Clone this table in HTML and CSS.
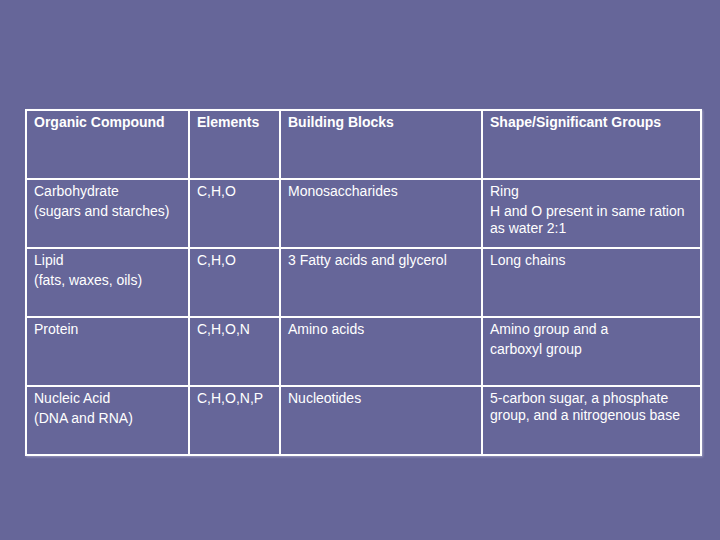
FILE: index.html
```html
<!DOCTYPE html>
<html>
<head>
<meta charset="utf-8">
<link rel="stylesheet" href="styles.css">
</head>
<body>
<div class="slide">
  <div class="grid">
    <div class="cell head"><p>Organic Compound</p></div>
    <div class="cell head"><p>Elements</p></div>
    <div class="cell head"><p>Building Blocks</p></div>
    <div class="cell head"><p>Shape/Significant Groups</p></div>

    <div class="cell"><p>Carbohydrate</p><p>(sugars and starches)</p></div>
    <div class="cell"><p>C,H,O</p></div>
    <div class="cell"><p>Monosaccharides</p></div>
    <div class="cell"><p>Ring</p><p>H and O present in same ration as water 2:1</p></div>

    <div class="cell"><p>Lipid</p><p>(fats, waxes, oils)</p></div>
    <div class="cell"><p>C,H,O</p></div>
    <div class="cell"><p>3 Fatty acids and glycerol</p></div>
    <div class="cell"><p>Long chains</p></div>

    <div class="cell"><p>Protein</p></div>
    <div class="cell"><p>C,H,O,N</p></div>
    <div class="cell"><p>Amino acids</p></div>
    <div class="cell"><p>Amino group and a</p><p>carboxyl group</p></div>

    <div class="cell"><p>Nucleic Acid</p><p>(DNA and RNA)</p></div>
    <div class="cell"><p>C,H,O,N,P</p></div>
    <div class="cell"><p>Nucleotides</p></div>
    <div class="cell"><p>5-carbon sugar, a phosphate group, and a nitrogenous base</p></div>
  </div>
</div>
</body>
</html>
```

FILE: styles.css
```css
html, body {
  margin: 0;
  padding: 0;
}
body {
  background: #666699;
  width: 720px;
  height: 540px;
  overflow: hidden;
  font-family: "Liberation Sans", Arial, sans-serif;
  font-size: 14px;
  color: #ffffff;
}
.slide {
  padding: 109px 0 0 25px;
}
.grid {
  display: grid;
  grid-template-columns: 161px 89px 200px 217px;
  grid-auto-rows: 67px;
  gap: 2px;
  padding: 2px;
  width: 673px;
  background: #ffffff;
  box-shadow: 1px 1px 2px rgba(190, 190, 215, 0.55);
}
.cell {
  background: #666699;
  padding: 3px 6px 0 7px;
  line-height: 17px;
}
.cell p {
  margin: 0;
}
.cell p + p {
  margin-top: 3px;
}
.head {
  font-weight: bold;
}
```
